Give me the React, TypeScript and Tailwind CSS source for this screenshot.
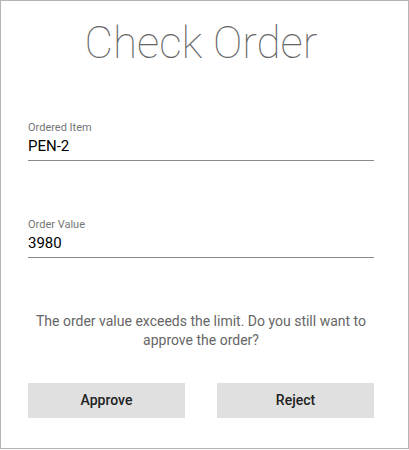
const FONT = "font-['Roboto',sans-serif]";

function Field({ label, value }: { label: string; value: string }) {
  return (
    <div className="flex flex-col">
      <label className="text-[11px] leading-[14px] text-[#757575]">{label}</label>
      <div className="mt-[2px] pb-[5px] border-b border-[#8a8a8a] text-[15px] leading-[18px] text-black">
        {value}
      </div>
    </div>
  );
}

export default function App() {
  return (
    <div className={`${FONT} w-[409px] h-[449px] bg-white border border-[#b5b5b5] flex flex-col pl-[27px] pr-[34px]`}>
      <h1 className="mt-[16px] text-center text-[44px] leading-[52px] font-thin text-[#666]">
        Check Order
      </h1>

      <div className="mt-[52px]">
        <Field label="Ordered Item" value="PEN-2" />
      </div>
      <div className="mt-[57px]">
        <Field label="Order Value" value="3980" />
      </div>

      <p className="mt-[54px] text-center text-[14px] leading-[19px] text-[#666]">
        The order value exceeds the limit. Do you still want to approve the order?
      </p>

      <div className="mt-[33px] flex justify-between">
        <button className="w-[157px] h-[35px] bg-[#e0e0e0] text-[14px] font-medium text-[#222]">
          Approve
        </button>
        <button className="w-[157px] h-[35px] bg-[#e0e0e0] text-[14px] font-medium text-[#222]">
          Reject
        </button>
      </div>
    </div>
  );
}
